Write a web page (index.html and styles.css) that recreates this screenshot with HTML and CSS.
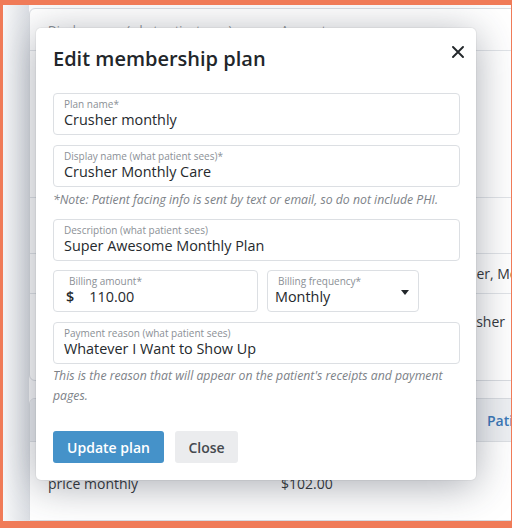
FILE: index.html
```html
<!DOCTYPE html>
<html>
<head>
<meta charset="utf-8">
<link rel="stylesheet" href="styles.css">
</head>
<body>
<div class="screen">
  <div class="sidebar"></div>
  <div class="main">
    <div class="card card-one">
      <div class="row1 head"><span>Display name (what patient sees)</span><span>Amount</span><span></span></div>
      <div class="row1 r-b"><span></span><span></span><span></span></div>
      <div class="row1 r-c"><span></span><span></span><span></span></div>
      <div class="row1 r-d"><span></span><span></span><span>Crusher, Monthly</span></div>
      <div class="row1 r-e"><span></span><span></span><span class="shift">Crusher</span></div>
    </div>
    <div class="card card-two">
      <div class="row2 head2"><span>Name</span><span>Amount</span><span class="link">Patients</span></div>
      <div class="row2 r-f"><span>Crusher<br>price monthly</span><span>$102.00</span><span></span></div>
    </div>
  </div>

  <div class="modal">
    <h1 class="modal-title">Edit membership plan</h1>
    <button class="close-x" aria-label="Close">
      <svg width="12" height="12" viewBox="0 0 12 12"><path d="M1 1 L11 11 M11 1 L1 11" stroke="#23272b" stroke-width="1.9" stroke-linecap="round"/></svg>
    </button>

    <div class="field">
      <div class="label">Plan name*</div>
      <div class="value">Crusher monthly</div>
    </div>
    <div class="field gap">
      <div class="label">Display name (what patient sees)*</div>
      <div class="value">Crusher Monthly Care</div>
    </div>
    <p class="note">*Note: Patient facing info is sent by text or email, so do not include PHI.</p>
    <div class="field">
      <div class="label">Description (what patient sees)</div>
      <div class="value">Super Awesome Monthly Plan</div>
    </div>
    <div class="billing">
      <div class="field amount">
        <div class="label">Billing amount*</div>
        <div class="value"><span class="dollar">$</span><span>110.00</span></div>
      </div>
      <div class="field freq">
        <div class="label">Billing frequency*</div>
        <div class="value">Monthly</div>
        <span class="caret"></span>
      </div>
    </div>
    <div class="field">
      <div class="label">Payment reason (what patient sees)</div>
      <div class="value">Whatever I Want to Show Up</div>
    </div>
    <p class="help">This is the reason that will appear on the patient's receipts and payment pages.</p>
    <div class="actions">
      <button class="btn primary">Update plan</button>
      <button class="btn secondary">Close</button>
    </div>
  </div>
</div>
</body>
</html>
```

FILE: styles.css
```css
* { box-sizing: border-box; }
html, body { margin: 0; padding: 0; }
body {
  background: #f07b58;
  font-family: "Open Sans", "Liberation Sans", sans-serif;
  width: 512px;
  height: 528px;
  overflow: hidden;
}
.screen {
  position: relative;
  margin: 5px 1px 7px 3px;
  width: 508px;
  height: 516px;
  background: #fbfbfc;
  overflow: hidden;
  display: flex;
}
.sidebar {
  width: 26px;
  flex: none;
  background: linear-gradient(to right, #f7f8f9, #dcdfe4);
}
.main {
  flex: 1;
  margin-right: -30px;
  padding-top: 3px;
  display: flex;
  flex-direction: column;
  gap: 17px;
}
.card {
  background: #fff;
  border: 1px solid #d9dce1;
  border-radius: 6px;
}
.card-one { height: 373px; }
.row1 {
  display: grid;
  grid-template-columns: 233px 157px 1fr;
  padding-left: 18px;
  font-size: 14px;
  color: #33373b;
  border-bottom: 1px solid #e1e4e8;
  white-space: nowrap;
}
.row1.head { height: 42px; align-items: center; font-size: 12px; color: #8a8f95; padding-top: 1px; }
.r-b { height: 147px; }
.r-c { height: 56px; }
.r-d { height: 40px; align-items: center; }
.r-e { height: 86px; border-bottom: none; padding-top: 18px; line-height: 20px; }
.shift { padding-left: 15px; }
.card-two { flex: 1; border-radius: 6px 6px 0 0; overflow: hidden; }
.row2 {
  display: grid;
  grid-template-columns: 233px 206px 1fr;
  padding-left: 18px;
  font-size: 14px;
  color: #33373b;
  white-space: nowrap;
}
.head2 {
  height: 43px;
  align-items: center;
  background: #eef0f3;
  border-bottom: 1px solid #dde0e4;
  font-weight: 600;
  color: #555a60;
}
.link { color: #3b78b8; }
.r-f { padding-top: 12px; line-height: 20px; }
.r-f span:nth-child(2) { padding-top: 20px; }

/* modal */
.modal {
  position: absolute;
  left: 33px;
  top: 23px;
  width: 440px;
  background: #fff;
  border-radius: 5px;
  padding: 17px 16px 17px 17px;
  box-shadow: 0 6px 40px rgba(40, 48, 66, 0.4), 0 0 0 1px rgba(0,0,0,0.04);
}
.modal-title {
  margin: 0 0 20px;
  font-size: 20px;
  font-weight: 600;
  line-height: 28px;
  color: #22262a;
}
.close-x {
  position: absolute;
  top: 18px;
  right: 12px;
  width: 12px;
  height: 12px;
  padding: 0;
  border: 0;
  background: none;
  display: block;
}
.close-x svg { display: block; }
.field {
  position: relative;
  height: 42px;
  border: 1px solid #dcdfe3;
  border-radius: 4px;
  padding: 4px 10px;
}
.field.gap { margin-top: 10px; }
.label {
  font-size: 10px;
  line-height: 12px;
  color: #8b9096;
  white-space: nowrap;
}
.value {
  font-size: 14.4px;
  line-height: 20px;
  color: #25292d;
  white-space: nowrap;
}
.note {
  margin: 4px 0 10px;
  font-size: 12.25px;
  line-height: 18px;
  font-style: italic;
  color: #7d8288;
  white-space: nowrap;
}
.billing {
  display: flex;
  gap: 9px;
  margin: 9px 0 10px;
}
.amount { width: 205px; padding-left: 15px; }
.amount .value { margin-left: -3px; display: flex; gap: 15px; }
.dollar { font-weight: 600; }
.freq { width: 152px; }
.freq .value { margin-left: -3px; }
.caret {
  position: absolute;
  right: 9px;
  top: 19px;
  width: 0;
  height: 0;
  border-left: 4px solid transparent;
  border-right: 4px solid transparent;
  border-top: 5px solid #23272b;
}
.help {
  margin: 2px 0 25px;
  font-size: 12.25px;
  line-height: 20px;
  font-style: italic;
  color: #7d8288;
}
.actions { display: flex; gap: 11px; }
.btn {
  height: 32px;
  border: 0;
  border-radius: 3px;
  font-family: "Open Sans", "Liberation Sans", sans-serif;
  font-size: 14px;
  font-weight: 600;
  padding: 0 14px;
}
.primary { background: #4592c9; color: #fff; width: 111px; }
.secondary { background: #ebecee; color: #45494e; width: 63px; padding: 0; }
```
